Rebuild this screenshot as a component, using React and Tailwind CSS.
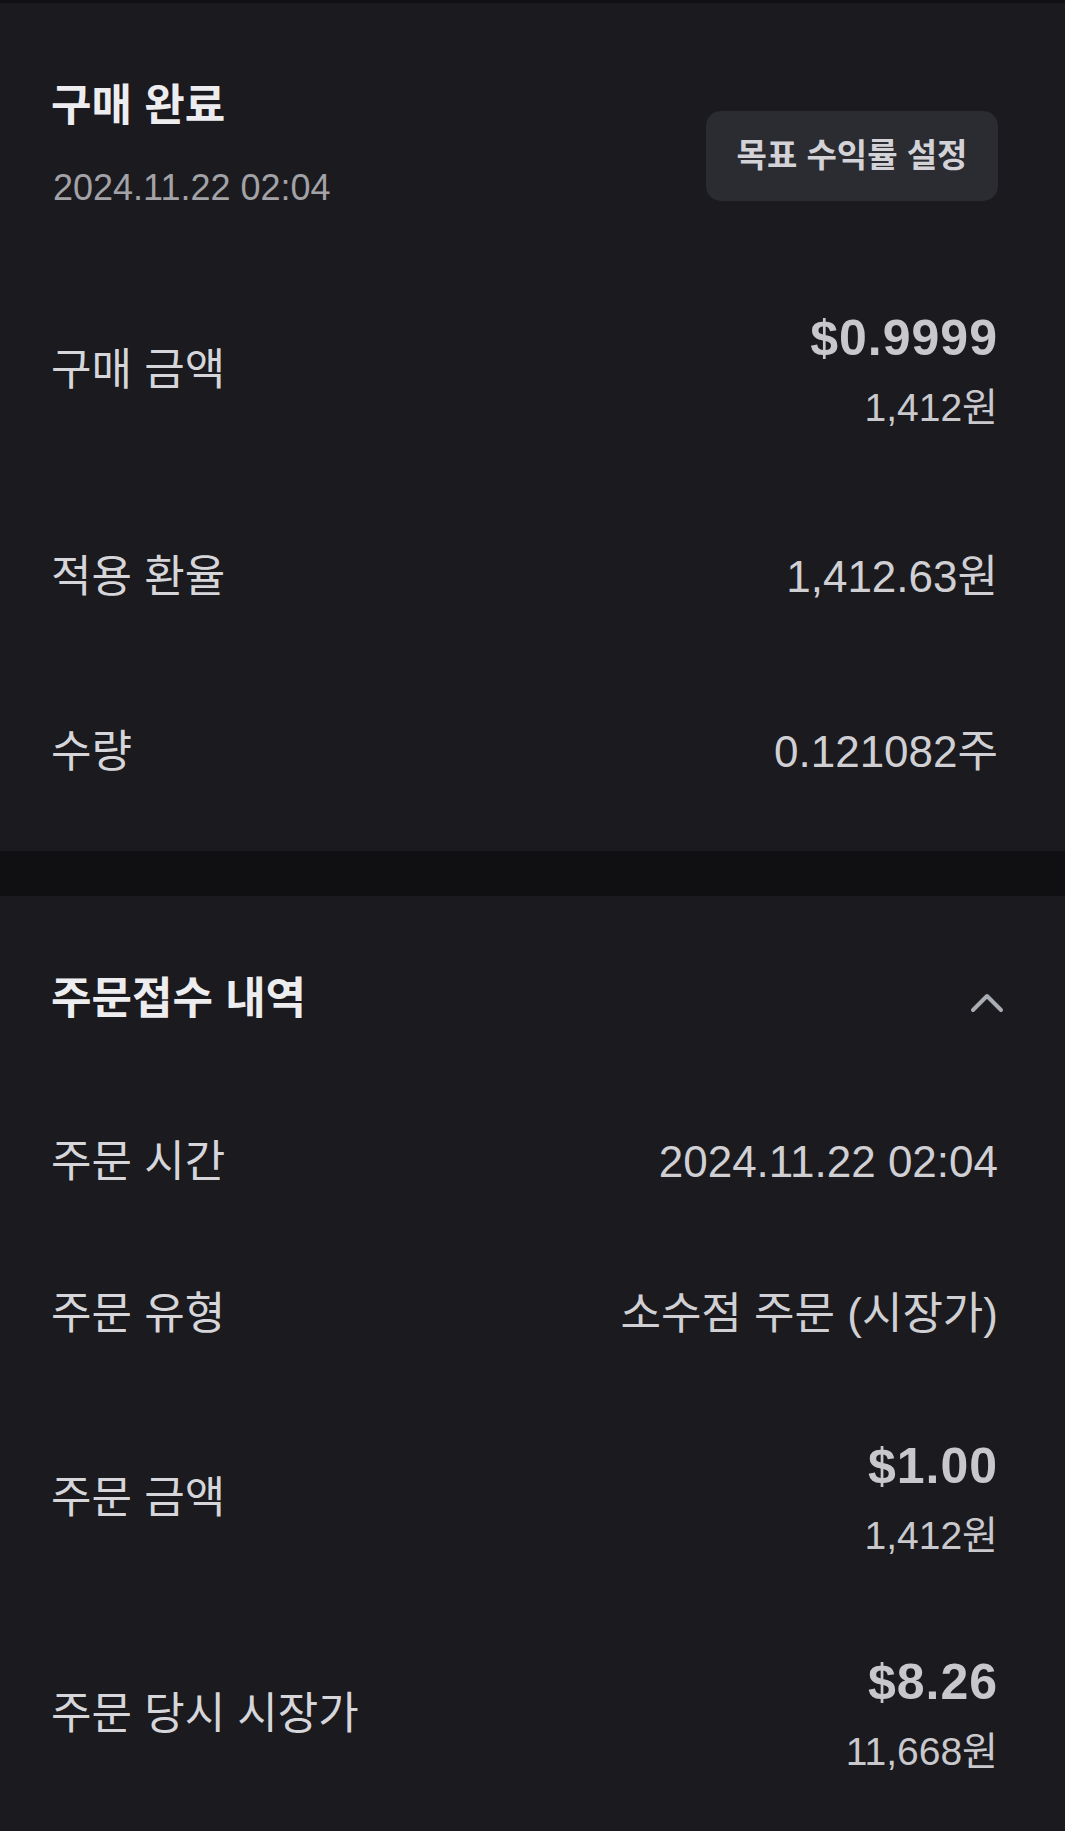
const FONT = "font-['Liberation_Sans','Noto_Sans_CJK_KR',sans-serif]";

const PURCHASE_ROWS = [
  { label: "구매 금액", main: "$0.9999", sub: "1,412원" },
  { label: "적용 환율", value: "1,412.63원" },
  { label: "수량", value: "0.121082주" },
];

const ORDER_ROWS = [
  { label: "주문 시간", value: "2024.11.22 02:04" },
  { label: "주문 유형", value: "소수점 주문 (시장가)" },
  { label: "주문 금액", main: "$1.00", sub: "1,412원" },
  { label: "주문 당시 시장가", main: "$8.26", sub: "11,668원" },
];

function DetailRow({ row, padding }) {
  return (
    <div className={`flex items-center justify-between ${padding}`}>
      <span className="text-[44px] leading-[60px] text-[#d6d6da]">
        {row.label}
      </span>
      {row.main ? (
        <div className="flex flex-col items-end">
          <span className="text-[50px] font-bold leading-[60px] tracking-[0.02em] text-[#c8c8cc]">
            {row.main}
          </span>
          <span className="mt-[16px] text-[39px] leading-[48px] text-[#c9c9cd]">
            {row.sub}
          </span>
        </div>
      ) : (
        <span className="text-[44px] leading-[60px] text-[#d0d0d4]">
          {row.value}
        </span>
      )}
    </div>
  );
}

function App() {
  return (
    <div className={`min-h-screen bg-[#1a1a1f] ${FONT}`}>
      <div className="h-[3px] bg-[#111114]" />

      <section className="pl-[51px] pr-[67px] pb-[12px]">
        <div className="flex items-start justify-between pt-[75px] pb-[40px]">
          <div>
            <h1 className="text-[44px] font-bold leading-[56px] text-[#ededf0]">
              구매 완료
            </h1>
            <p className="mt-[32px] pl-[2px] text-[36px] leading-[44px] text-[#a2a2a7]">
              2024.11.22 02:04
            </p>
          </div>
          <button className="mt-[33px] flex h-[90px] w-[292px] items-center justify-center rounded-[15px] bg-[#2b2b32] text-[33px] font-semibold text-[#d2d2d7]">
            목표 수익률 설정
          </button>
        </div>

        {PURCHASE_ROWS.map((row) => (
          <DetailRow key={row.label} row={row} padding="py-[57.5px]" />
        ))}
      </section>

      <div className="h-[45px] bg-[#101013]" />

      <section className="pl-[51px] pr-[67px]">
        <div className="flex items-center justify-between pt-[75px] pb-[59px]">
          <h2 className="text-[44px] font-bold leading-[56px] text-[#ededf0]">
            주문접수 내역
          </h2>
          <svg
            width="34"
            height="22"
            viewBox="0 0 34 22"
            className="mr-[-6px] mt-[6px]"
            fill="none"
            stroke="#a9acb3"
            strokeWidth="4"
            strokeLinecap="round"
            strokeLinejoin="round"
          >
            <polyline points="3,19 17,5 31,19" />
          </svg>
        </div>

        {ORDER_ROWS.map((row) => (
          <DetailRow key={row.label} row={row} padding="py-[46px]" />
        ))}
      </section>
    </div>
  );
}

export default App;
